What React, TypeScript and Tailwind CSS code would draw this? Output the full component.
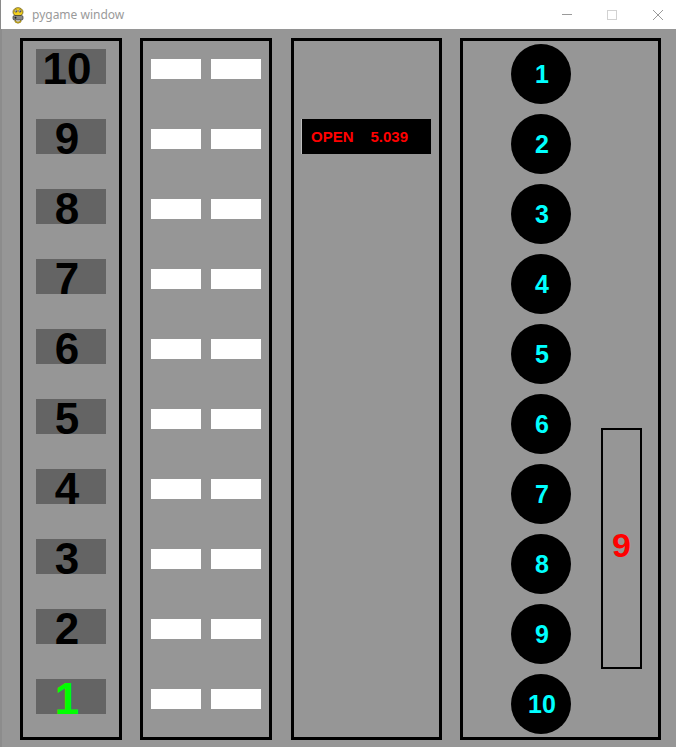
import React from 'react';

const levels = [10, 9, 8, 7, 6, 5, 4, 3, 2, 1];
const circles = [1, 2, 3, 4, 5, 6, 7, 8, 9, 10];

const gameFont = { fontFamily: '"Liberation Sans", Arial, sans-serif' };

const PygameIcon: React.FC = () => (
  <svg width="12" height="17" viewBox="0 0 12 17">
    {/* snake head */}
    <ellipse cx="6" cy="5" rx="5" ry="4.3" fill="#f2cf1d" stroke="#6b5a12" strokeWidth="0.8" />
    <circle cx="4" cy="4" r="1.3" fill="#fff" stroke="#333" strokeWidth="0.5" />
    <circle cx="8" cy="4" r="1.3" fill="#fff" stroke="#333" strokeWidth="0.5" />
    <circle cx="4.2" cy="4.2" r="0.6" fill="#000" />
    <circle cx="8.2" cy="4.2" r="0.6" fill="#000" />
    {/* joystick body */}
    <rect x="1" y="8.5" width="10" height="4.5" rx="1.5" fill="#8a8a8a" stroke="#333" strokeWidth="0.7" />
    <circle cx="3.5" cy="10.7" r="1" fill="#222" />
    <path d="M3 13 Q6 17 9 13 L9 15 Q6 17.5 3 15 Z" fill="#f2cf1d" stroke="#6b5a12" strokeWidth="0.6" />
  </svg>
);

const TitleBar: React.FC = () => (
  <div className="h-[29px] shrink-0 bg-white flex items-center border-l border-[#8a8a8a]">
    <div className="ml-[11px] mt-[1px] flex items-center">
      <PygameIcon />
    </div>
    <span
      className="ml-[8px] text-[12px] text-[#9a9a9a] leading-none"
      style={{ fontFamily: '"Noto Sans", "Open Sans", sans-serif' }}
    >
      pygame window
    </span>
    <div className="ml-auto flex items-center mr-[13px]">
      <div className="w-[10px] h-px bg-[#9a9a9a]" />
      <div className="ml-[35px] w-[10px] h-[10px] border border-[#d2d2d2]" />
      <svg className="ml-[36px]" width="10" height="10" viewBox="0 0 10 10">
        <path d="M0 0 L10 10 M10 0 L0 10" stroke="#9a9a9a" strokeWidth="1" />
      </svg>
    </div>
  </div>
);

const App: React.FC = () => {
  return (
    <div className="w-[676px] h-[747px] flex flex-col overflow-hidden bg-white">
      <TitleBar />

      <div className="flex-1 bg-[#969696] flex items-start pt-[9px] border-l-2 border-[#8c8c8c]" style={gameFont}>
        {/* Floor labels */}
        <div className="ml-[18px] w-[102px] h-[702px] border-[3px] border-black flex flex-col gap-[35px] pt-[8px] pl-[13px]">
          {levels.map((n) => (
            <div key={n} className="w-[70px] h-[35px] shrink-0 bg-[#646464] flex justify-center pr-[8px]">
              <span
                className={`text-[44px] font-bold leading-[44px] -mt-[2px] ${n === 1 ? 'text-[#00ff00]' : 'text-black'}`}
              >
                {n}
              </span>
            </div>
          ))}
        </div>

        {/* Call buttons */}
        <div className="ml-[18px] w-[132px] h-[702px] border-[3px] border-black flex flex-col gap-[50px] pt-[18px] pl-[8px]">
          {levels.map((n) => (
            <div key={n} className="flex gap-[10px] shrink-0">
              <div className="w-[50px] h-[20px] bg-white" />
              <div className="w-[50px] h-[20px] bg-white" />
            </div>
          ))}
        </div>

        {/* Door status */}
        <div className="ml-[19px] w-[151px] h-[702px] border-[3px] border-black pt-[78px] pl-[7px]">
          <div className="w-[130px] h-[35px] bg-black border-l border-[#bdbdbd] flex items-center pl-[9px] pb-[1px]">
            <span className="text-[15px] font-bold text-[#ff0000] leading-none">OPEN</span>
            <span className="ml-[17px] text-[15px] font-bold text-[#ff0000] leading-none">5.039</span>
          </div>
        </div>

        {/* Car panel */}
        <div className="ml-[18px] w-[201px] h-[702px] border-[3px] border-black flex items-start">
          <div className="ml-[48px] pt-[3px] flex flex-col gap-[10px]">
            {circles.map((n) => (
              <div key={n} className="w-[60px] h-[60px] rounded-full bg-black flex items-center justify-center pl-[2px]">
                <span className="text-[25px] font-bold text-[#00ffff] leading-none mt-[1px]">{n}</span>
              </div>
            ))}
          </div>
          <div className="ml-[30px] mt-[387px] w-[41px] h-[241px] border-2 border-black flex items-center justify-center pb-[7px]">
            <span className="text-[34px] font-bold text-[#ff0000] leading-none">9</span>
          </div>
        </div>
      </div>
    </div>
  );
};

export default App;
